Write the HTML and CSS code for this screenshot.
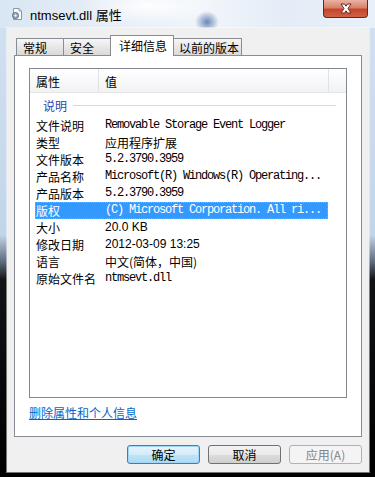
FILE: index.html
```html
<!DOCTYPE html>
<html lang="zh-CN">
<head>
<meta charset="UTF-8" />
<meta name="viewport" content="width=device-width, initial-scale=1" />
<title>ntmsevt.dll 属性</title>
<link rel="stylesheet" href="styles.css">
</head>
<body>
  <div class="window">
    <div class="titlebar">
      <svg class="app-icon" width="12" height="12" viewBox="0 0 12 12">
        <path d="M2.5 0.5 H8 L10.5 3 V11.5 H2.5 Z" fill="#fdfdfd" stroke="#8a96a6" stroke-width="1"/>
        <path d="M8 0.5 V3 H10.5" fill="#dde4ec" stroke="#8a96a6" stroke-width="1"/>
        <circle cx="4.5" cy="7.5" r="3" fill="#9fb3c9" stroke="#52667e" stroke-width="1"/>
        <circle cx="4.5" cy="7.5" r="1" fill="#fdfdfd"/>
      </svg>
      <span class="title">ntmsevt.dll 属性</span>
      <div class="close">
        <svg width="16" height="11" viewBox="0 0 16 11">
          <path d="M3 1 H6.5 L8 3.2 L9.5 1 H13 L10 5.5 L13 10 H9.5 L8 7.8 L6.5 10 H3 L6 5.5 Z" fill="#ffffff" stroke="#6b2b22" stroke-width="1" stroke-linejoin="round"/>
        </svg>
      </div>
    </div>

    <div class="client">
      <div class="tabs">
        <div class="tab tab-general">常规</div>
        <div class="tab tab-security">安全</div>
        <div class="tab tab-details active">详细信息</div>
        <div class="tab tab-previous">以前的版本</div>
      </div>

      <div class="panel">
        <div class="list">
          <div class="list-head">
            <div class="col-name">属性</div>
            <div class="col-value">值</div>
            <div class="col-rest"></div>
          </div>
          <div class="group">
            <span>说明</span>
            <i class="group-line"></i>
          </div>
          <div class="rows">
            <div class="row"><span class="k">文件说明</span><span class="v mono">Removable Storage Event Logger</span></div>
            <div class="row"><span class="k">类型</span><span class="v">应用程序扩展</span></div>
            <div class="row"><span class="k">文件版本</span><span class="v mono">5.2.3790.3959</span></div>
            <div class="row"><span class="k">产品名称</span><span class="v mono">Microsoft(R) Windows(R) Operating...</span></div>
            <div class="row"><span class="k">产品版本</span><span class="v mono">5.2.3790.3959</span></div>
            <div class="row selected"><span class="k">版权</span><span class="v mono">(C) Microsoft Corporation. All ri...</span></div>
            <div class="row"><span class="k">大小</span><span class="v sans">20.0 KB</span></div>
            <div class="row"><span class="k">修改日期</span><span class="v sans">2012-03-09 13:25</span></div>
            <div class="row"><span class="k">语言</span><span class="v">中文(简体，中国)</span></div>
            <div class="row"><span class="k">原始文件名</span><span class="v mono">ntmsevt.dll</span></div>
          </div>
        </div>
        <a class="link" href="#">删除属性和个人信息</a>
      </div>

      <div class="buttons">
        <button class="btn default">确定</button>
        <button class="btn">取消</button>
        <button class="btn disabled">应用(A)</button>
      </div>
    </div>
  </div>
</body>
</html>
```

FILE: styles.css
```css
body {
  margin: 0;
  font-family: "Noto Sans CJK SC", "Liberation Sans", sans-serif;
  font-size: 12px;
  color: #000;
  background: #000;
}
.window {
  width: 375px;
  height: 477px;
  display: flex;
  flex-direction: column;
  overflow: hidden;
  background: linear-gradient(180deg, #d3e2f1 0, #c2d5e9 235px, #5d6b7c 262px, #101214 280px, #000 100%);
}
.titlebar {
  height: 28px;
  flex: none;
  display: flex;
  align-items: center;
  padding-left: 11px;
  background:
    radial-gradient(ellipse 12px 11px at 207px 22px, rgba(60,100,160,0.75), rgba(60,100,160,0)),
    radial-gradient(ellipse 70px 18px at 150px 6px, rgba(255,255,255,0.9), rgba(255,255,255,0)),
    linear-gradient(90deg, #d9e6f3, #e9f0f8 35%, #f1f5fa 55%, #e4edf7 75%, #e8f0f9);
}
.app-icon {
  margin-right: 7px;
}
.title {
  font-family: "Liberation Sans", "Noto Sans CJK SC", sans-serif;
  font-size: 13px;
  color: #000;
}
.close {
  margin-left: auto;
  margin-right: 7px;
  align-self: flex-start;
  width: 45px;
  height: 18px;
  box-sizing: border-box;
  border: 1px solid #5e2a22;
  border-top: none;
  border-radius: 0 0 4px 4px;
  background: linear-gradient(180deg, #eab2a4, #d98169 45%, #c7452d 55%, #cf6244);
  display: flex;
  align-items: center;
  justify-content: center;
}
.client {
  flex: 1;
  margin: 0 6px 5px 7px;
  padding: 7px 7px 8px 7px;
  background: #f0f0f0;
  display: flex;
  flex-direction: column;
  box-shadow: 0 0 0 1px rgba(255,255,255,0.45);
}
.tabs {
  height: 21px;
  display: flex;
  align-items: flex-end;
  padding-left: 2px;
  margin-bottom: -1px;
}
.tab {
  height: 18px;
  box-sizing: border-box;
  border: 1px solid #898c95;
  border-bottom: none;
  margin-right: -1px;
  padding-left: 6px;
  line-height: 17px;
  background: linear-gradient(180deg, #f6f6f6, #e3e3e3 60%, #d8d8d8);
}
.tab-general { width: 48px; }
.tab-security { width: 48px; }
.tab-details { width: 64px; }
.tab-previous { width: 69px; padding-left: 5px; }
.tab.active {
  height: 21px;
  padding-left: 8px;
  line-height: 19px;
  background: #fff;
  position: relative;
  z-index: 1;
}
.panel {
  height: 382px;
  box-sizing: border-box;
  border: 1px solid #898c95;
  background: #fff;
  padding: 12px 14px 0 14px;
}
.list {
  height: 330px;
  box-sizing: border-box;
  border: 1px solid #828790;
  background: #fff;
}
.list-head {
  height: 24px;
  box-sizing: border-box;
  display: flex;
  border-bottom: 1px solid #e5e5e5;
  background: linear-gradient(180deg, #ffffff, #f1f2f4);
}
.list-head div {
  padding: 4px 0 0 6px;
  line-height: 18px;
  box-sizing: border-box;
}
.col-name {
  width: 69px;
  border-right: 1px solid #dfe2e6;
}
.col-value {
  width: 230px;
  border-right: 1px solid #dfe2e6;
}
.col-rest {
  flex: 1;
}
.group {
  height: 24px;
  display: flex;
  align-items: center;
  padding: 0 10px 0 13px;
  color: #1f45b0;
}
.group-line {
  flex: 1;
  height: 1px;
  margin-left: 6px;
  background: #cddcec;
}
.rows {
  padding-left: 5px;
}
.row {
  width: 293px;
  height: 17px;
  box-sizing: border-box;
  border: 1px solid transparent;
  display: flex;
  line-height: 15px;
  white-space: nowrap;
}
.row .k {
  width: 62px;
  flex: none;
}
.row .v {
  padding-left: 7px;
}
.mono {
  font-family: "Liberation Mono", monospace;
  font-size: 12px;
  letter-spacing: -1.2px;
}
.sans {
  font-family: "Liberation Sans", sans-serif;
}
.row.selected {
  background: #3399ff;
  color: #fff;
  border: 1px dotted #e29a55;
}
.link {
  display: inline-block;
  margin-top: 7px;
  line-height: 16px;
  color: #0066cc;
  text-decoration: underline;
}
.buttons {
  display: flex;
  justify-content: flex-end;
  gap: 8px;
  margin-top: 8px;
}
.btn {
  width: 73px;
  height: 19px;
  padding: 0;
  font-family: "Noto Sans CJK SC", sans-serif;
  font-size: 12px;
  line-height: 17px;
  color: #000;
  border: 1px solid #707070;
  border-radius: 3px;
  background: linear-gradient(180deg, #f2f2f2, #ebebeb 50%, #dddddd 51%, #cfcfcf);
}
.btn.default {
  border-color: #3c7fb1;
  background: linear-gradient(180deg, #e6f4fc, #d3ecf9 50%, #c0e3f6 51%, #afdaf3);
  box-shadow: inset 0 0 0 1px #9fd6f5;
}
.btn.disabled {
  border-color: #adb2b5;
  background: #f4f4f4;
  color: #838383;
}
```
